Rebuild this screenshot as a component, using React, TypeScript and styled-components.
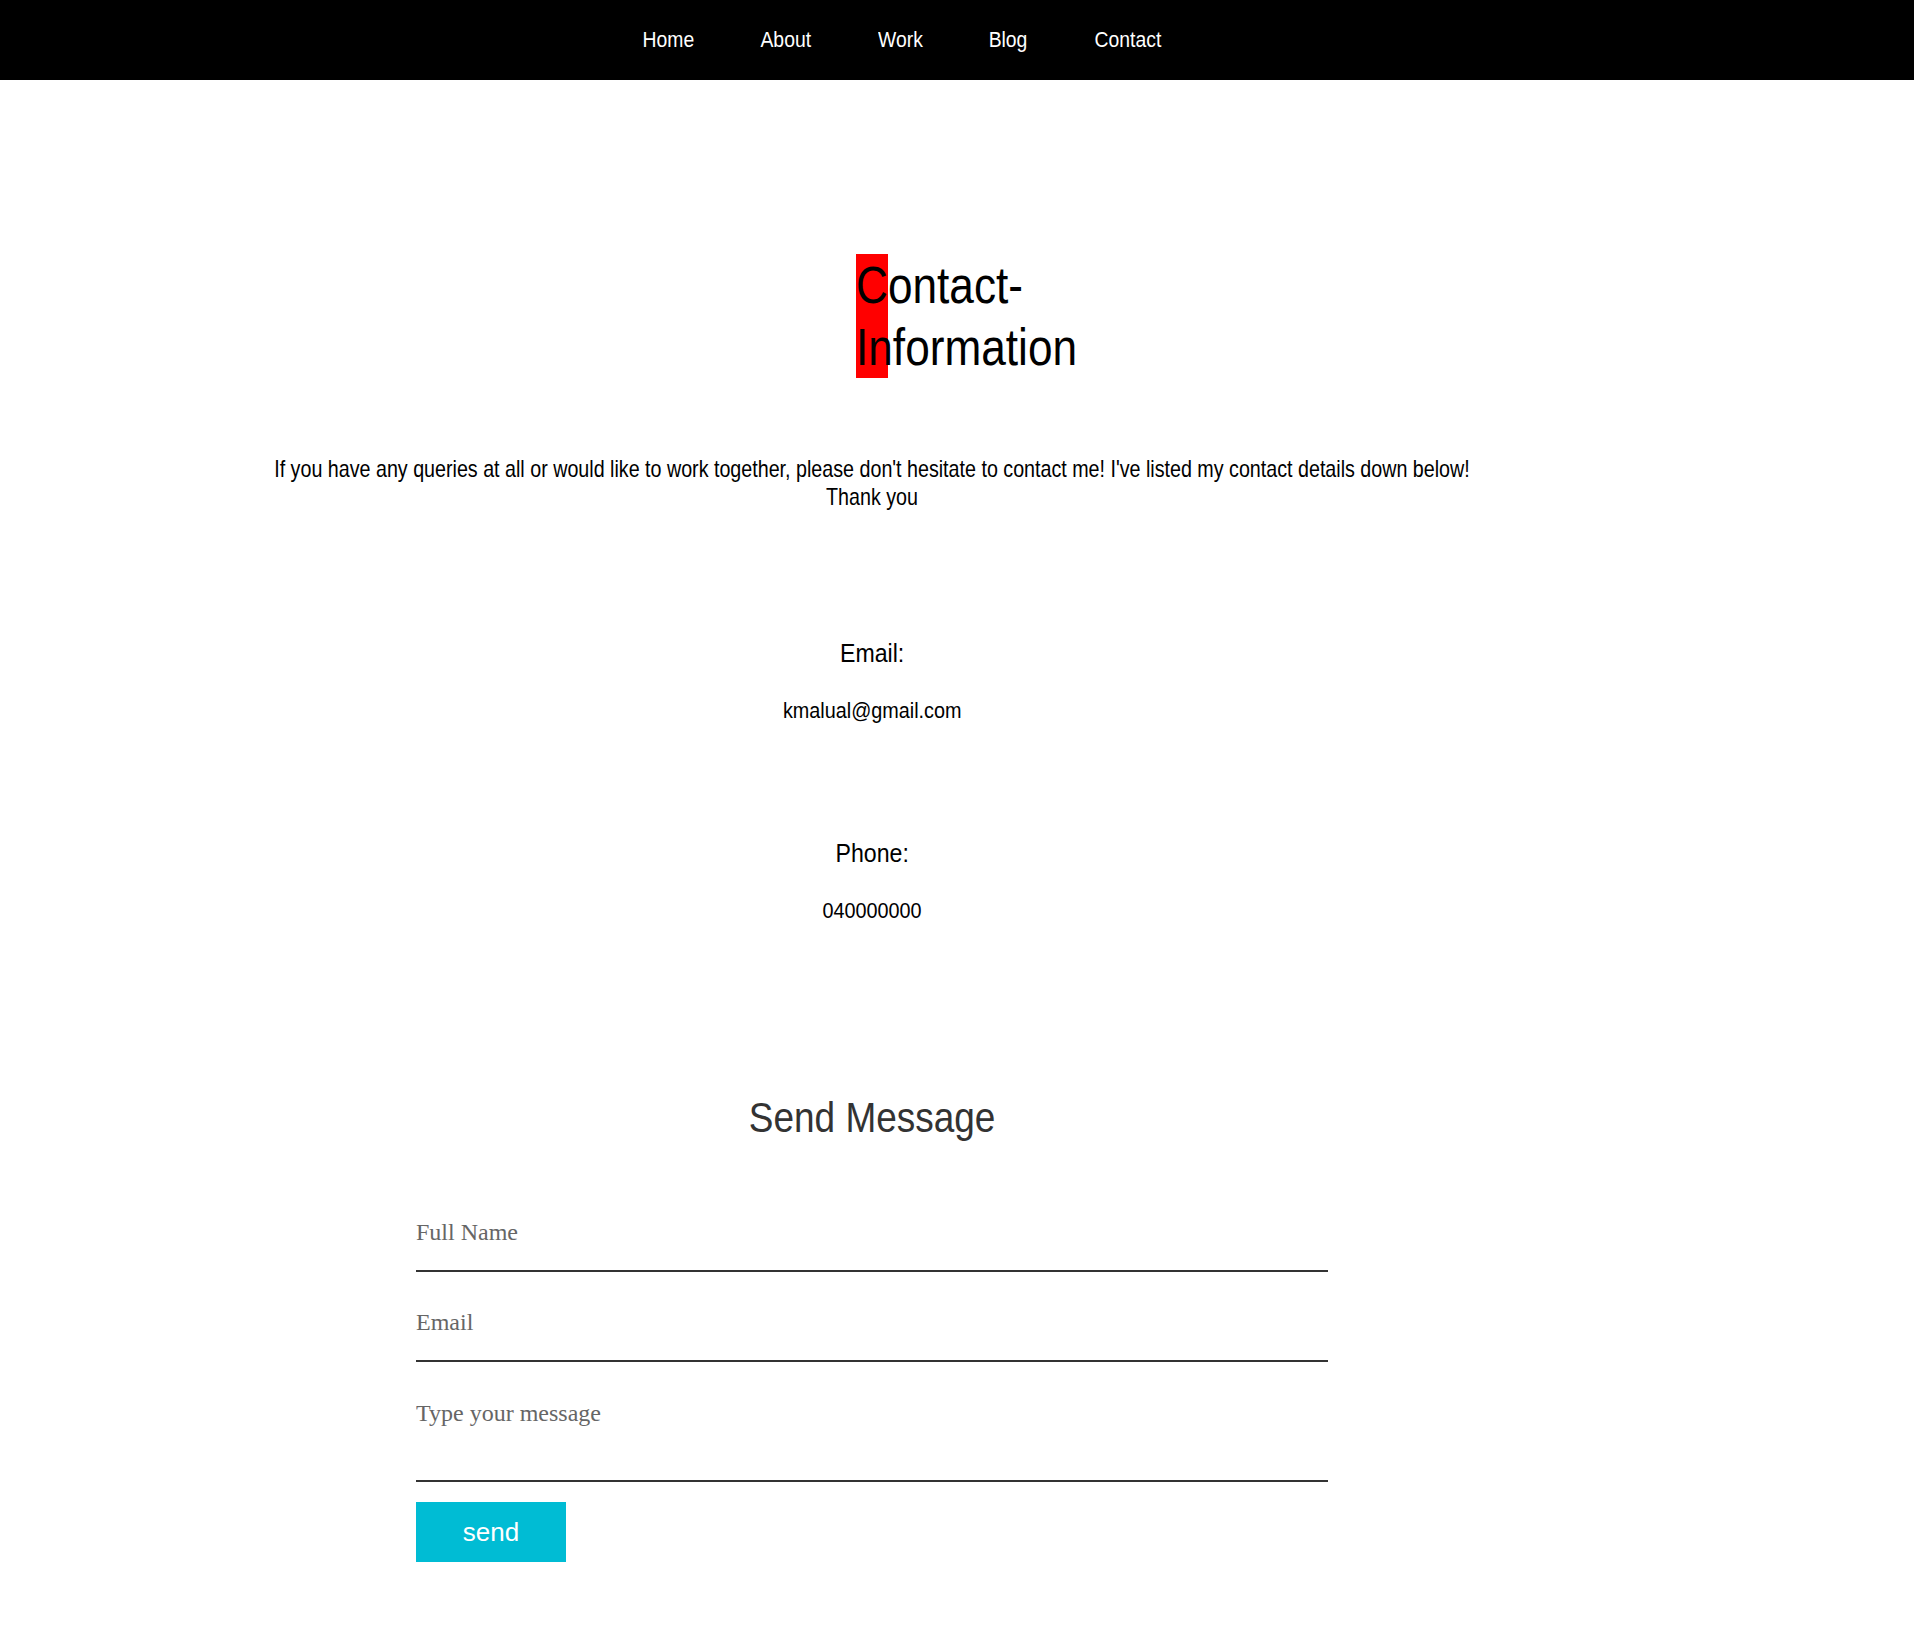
import React from 'react';
import styled, { createGlobalStyle } from 'styled-components';

const GlobalStyle = createGlobalStyle`
  html, body {
    margin: 0;
    padding: 0;
    background: #fff;
  }
  body {
    font-family: 'Liberation Sans', Arial, sans-serif;
    color: #000;
  }
`;

// the original face is a condensed sans; squeeze the regular one to its width
const Narrow = styled.span<{ $sx: number; $origin?: string }>`
  display: inline-block;
  transform: scaleX(${(p) => p.$sx});
  transform-origin: ${(p) => p.$origin || 'center'};
`;

const NavBar = styled.nav`
  background-color: #000;
  height: 80px;
`;

const NavList = styled.ul`
  width: 1744px;
  height: 100%;
  margin: 0;
  padding: 0;
  list-style: none;
  display: flex;
  align-items: center;
  justify-content: center;
`;

const NavItem = styled.li`
  margin-left: 60px;
`;

const NavLink = styled.a`
  color: #fff;
  font-size: 22px;
  text-decoration: none;
`;

const Main = styled.main`
  width: 1744px;
  display: flex;
  flex-direction: column;
  align-items: center;
  padding-bottom: 76px;
`;

const Title = styled.h1`
  width: 32px;
  margin: 174px 0 0;
  background-color: red;
  font-size: 52px;
  line-height: 62px;
  font-weight: normal;
`;

const Intro = styled.p`
  margin: 77px 0 0;
  font-size: 24px;
  line-height: 28px;
  text-align: center;
`;

const InfoBlock = styled.section<{ $top: number }>`
  margin-top: ${(p) => p.$top}px;
  display: flex;
  flex-direction: column;
  align-items: center;
  gap: 30px;
`;

const InfoLabel = styled.h3`
  margin: 0;
  font-size: 26px;
  font-weight: normal;
  line-height: 30px;
`;

const InfoValue = styled.p`
  margin: 0;
  font-size: 22px;
  line-height: 25px;
`;

const FormTitle = styled.h2`
  margin: 171px 0 0;
  font-size: 42px;
  font-weight: normal;
  line-height: 48px;
  color: #333;
`;

const Form = styled.form`
  width: 912px;
  margin-top: 66px;
  display: flex;
  flex-direction: column;
  align-items: flex-start;
  gap: 26px;
`;

const Field = styled.input`
  width: 100%;
  box-sizing: border-box;
  border: none;
  border-bottom: 2px solid #333;
  padding: 11px 0 24px;
  font-family: 'Liberation Serif', 'Times New Roman', serif;
  font-size: 24px;
  outline: none;
  background: transparent;
  &::placeholder {
    color: #666;
  }
`;

const MessageField = styled.textarea`
  width: 100%;
  height: 96px;
  box-sizing: border-box;
  margin-top: -2px;
  border: none;
  border-bottom: 2px solid #333;
  padding: 14px 0 0;
  font-family: 'Liberation Serif', 'Times New Roman', serif;
  font-size: 24px;
  resize: none;
  outline: none;
  background: transparent;
  &::placeholder {
    color: #666;
  }
`;

const SendButton = styled.button`
  width: 150px;
  height: 60px;
  margin-top: -6px;
  border: none;
  background-color: #00bcd4;
  color: #fff;
  font-family: 'Liberation Sans', Arial, sans-serif;
  font-size: 26px;
  cursor: pointer;
`;

const navItems = ['Home', 'About', 'Work', 'Blog', 'Contact'];

function App(): JSX.Element {
  return (
    <>
      <GlobalStyle />
      <NavBar>
        <NavList>
          {navItems.map((item) => (
            <NavItem key={item}>
              <NavLink href="#">
                <Narrow $sx={0.88}>{item}</Narrow>
              </NavLink>
            </NavItem>
          ))}
        </NavList>
      </NavBar>
      <Main>
        <Title>
          <Narrow $sx={0.85} $origin="left">
            Contact-Information
          </Narrow>
        </Title>
        <Intro>
          <Narrow $sx={0.82}>
            If you have any queries at all or would like to work together, please don't hesitate to contact me!
            I've listed my contact details down below!
            <br />
            Thank you
          </Narrow>
        </Intro>
        <InfoBlock $top={127}>
          <InfoLabel>
            <Narrow $sx={0.89}>Email:</Narrow>
          </InfoLabel>
          <InfoValue>
            <Narrow $sx={0.9}>kmalual@gmail.com</Narrow>
          </InfoValue>
        </InfoBlock>
        <InfoBlock $top={115}>
          <InfoLabel>
            <Narrow $sx={0.89}>Phone:</Narrow>
          </InfoLabel>
          <InfoValue>
            <Narrow $sx={0.9}>040000000</Narrow>
          </InfoValue>
        </InfoBlock>
        <FormTitle>
          <Narrow $sx={0.88}>Send Message</Narrow>
        </FormTitle>
        <Form onSubmit={(e) => e.preventDefault()}>
          <Field type="text" placeholder="Full Name" />
          <Field type="email" placeholder="Email" />
          <MessageField placeholder="Type your message" />
          <SendButton type="submit">send</SendButton>
        </Form>
      </Main>
    </>
  );
}

export default App;
